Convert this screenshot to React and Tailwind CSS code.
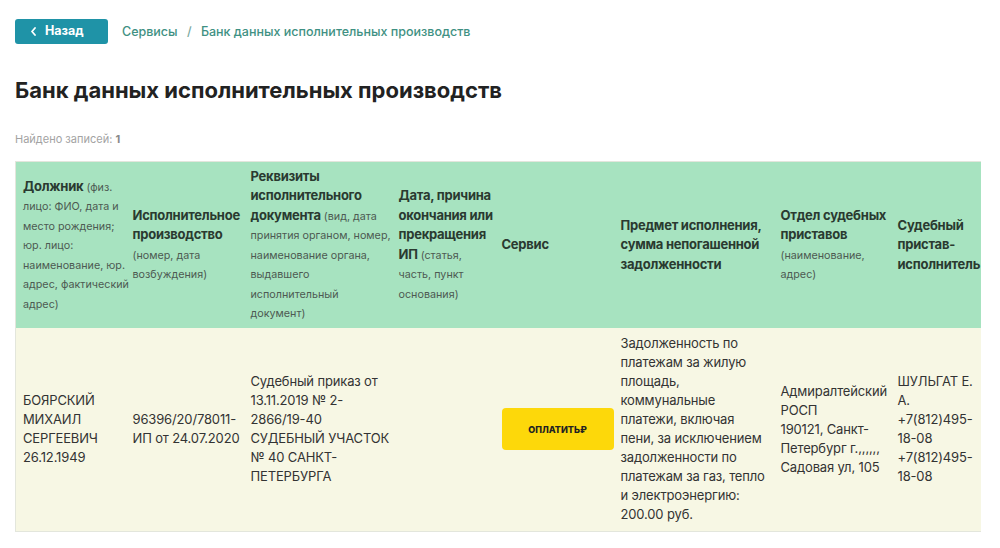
import React from "react";

const FONT = { fontFamily: "Inter, 'Noto Sans', sans-serif" };

// each header line: [bold part, gray note part]
const headers = [
  { w: 110, lines: [["Должник", " (физ."], ["", "лицо: ФИО, дата и"], ["", "место рождения;"], ["", "юр. лицо:"], ["", "наименование, юр."], ["", "адрес, фактический"], ["", "адрес)"]] },
  { w: 118, lines: [["Исполнительное"], ["производство"], ["", "(номер, дата"], ["", "возбуждения)"]] },
  { w: 148, lines: [["Реквизиты"], ["исполнительного"], ["документа", " (вид, дата"], ["", "принятия органом, номер,"], ["", "наименование органа,"], ["", "выдавшего"], ["", "исполнительный"], ["", "документ)"]] },
  { w: 103, lines: [["Дата, причина"], ["окончания или"], ["прекращения"], ["ИП", " (статья,"], ["", "часть, пункт"], ["", "основания)"]] },
  { w: 119, lines: [["Сервис"]] },
  { w: 160, lines: [["Предмет исполнения,"], ["сумма непогашенной"], ["задолженности"]] },
  { w: 117, lines: [["Отдел судебных"], ["приставов"], ["", "(наименование,"], ["", "адрес)"]] },
  { w: 91, lines: [["Судебный"], ["пристав-"], ["исполнитель"]] },
];

const row = [
  ["БОЯРСКИЙ", "МИХАИЛ", "СЕРГЕЕВИЧ", "26.12.1949"],
  ["96396/20/78011-", "ИП от 24.07.2020"],
  ["Судебный приказ от", "13.11.2019 № 2-", "2866/19-40", "СУДЕБНЫЙ УЧАСТОК", "№ 40 САНКТ-", "ПЕТЕРБУРГА"],
  [],
  null,
  [
    "Задолженность по",
    "платежам за жилую",
    "площадь,",
    "коммунальные",
    "платежи, включая",
    "пени, за исключением",
    "задолженности по",
    "платежам за газ, тепло",
    "и электроэнергию:",
    "200.00 руб.",
  ],
  ["Адмиралтейский", "РОСП", "190121, Санкт-", "Петербург г.,,,,,,", "Садовая ул, 105"],
  ["ШУЛЬГАТ Е.", "А.", "+7(812)495-", "18-08", "+7(812)495-", "18-08"],
];

const App = () => {
  return (
    <div className="min-h-[548px] bg-white px-[15px] pt-[19px] text-[#2b2b2b]" style={FONT}>

      {/* Back + breadcrumbs */}
      <div className="flex items-center gap-[14px]">
        <button className="flex h-[25px] w-[93px] items-center gap-[8px] rounded-[3px] bg-[#1f93a7] pl-[15px] text-[12.5px] font-bold text-white">
          <svg width="7" height="9" viewBox="0 0 7 9" fill="none">
            <path d="M5 1L2 4.5L5 8" stroke="white" strokeWidth="1.8" strokeLinecap="round" strokeLinejoin="round" />
          </svg>
          Назад
        </button>
        <div className="pt-[2px] text-[12.5px] font-medium text-[#3f9183]">
          Сервисы <span className="mx-[6px] text-[#7aa9a0]">/</span> Банк данных исполнительных производств
        </div>
      </div>

      <h1 className="mt-[31px] text-[22px] font-bold leading-[30px] text-[#222]">
        Банк данных исполнительных производств
      </h1>

      <p className="mt-[27px] text-[11px] leading-[14px] text-[#a3a3a3]">
        Найдено записей: <span className="font-bold text-[#8a8a8a]">1</span>
      </p>

      {/* Table */}
      <div className="mt-[15px] w-[966px] overflow-hidden">
        <table className="w-[966px] table-fixed border-collapse border border-[#e3e6dc]">
          <colgroup>
            {headers.map((h, i) => (
              <col key={i} style={{ width: h.w }} />
            ))}
          </colgroup>
          <thead>
            <tr className="bg-[#a7e3c0]">
              {headers.map((h, i) => (
                <th
                  key={i}
                  className="h-[166px] whitespace-nowrap pl-[7px] pr-0 text-left align-middle font-bold text-[#2a3a30]"
                >
                  {h.lines.map((ln, j) => (
                    <div key={j} className="h-[19.5px] text-[13px] leading-[19.5px] tracking-[-0.25px]">
                      {ln[0]}
                      {ln[1] && (
                        <span className="text-[10.75px] font-normal tracking-normal text-[#4d5a52]">{ln[1]}</span>
                      )}
                    </div>
                  ))}
                </th>
              ))}
            </tr>
          </thead>
          <tbody>
            <tr className="bg-[#f7f7e4] text-[13px] leading-[19px] tracking-[-0.15px] text-[#333]">
              {row.map((cell, i) =>
                cell === null ? (
                  <td key={i} className="h-[204px] pl-[7px] pr-0 align-middle">
                    <button className="flex h-[42px] w-[112px] items-center justify-center rounded-[4px] bg-[#fdd80a] text-[9px] font-extrabold tracking-normal text-[#222]">
                      ОПЛАТИТЬ₽
                    </button>
                  </td>
                ) : (
                  <td key={i} className="h-[204px] whitespace-nowrap pl-[7px] pr-0 align-middle">
                    {cell.map((ln, j) => (
                      <div key={j}>{ln}</div>
                    ))}
                  </td>
                )
              )}
            </tr>
          </tbody>
        </table>
      </div>
    </div>
  );
};

export default App;
